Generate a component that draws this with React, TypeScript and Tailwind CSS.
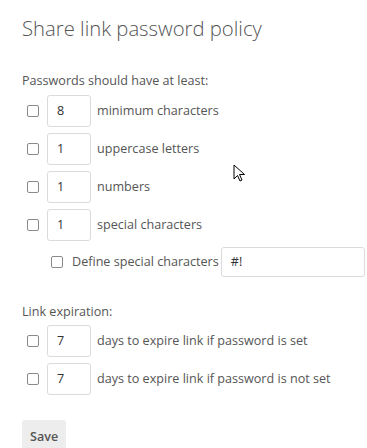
import React from "react";

const font = { fontFamily: '"Open Sans", "Noto Sans", sans-serif' };

function Box() {
  return <span className="inline-block w-[12px] h-[12px] border border-[#8a8a8a] rounded-[2px] bg-white shrink-0" />;
}

function NumRow({ value, label }: { value: string; label: string }) {
  return (
    <div className="flex items-center h-[32px] whitespace-nowrap">
      <span className="ml-[5px] mr-[8px] flex"><Box /></span>
      <div className="w-[44px] h-[32px] shrink-0 border border-[#dbdbdb] rounded-[3px] bg-white flex items-center pl-[9px] text-[12.6px] text-[#333]">{value}</div>
      <span className="ml-[6px] text-[12.6px] text-[#555]">{label}</span>
    </div>
  );
}

export default function App() {
  return (
    <div className="relative w-[367px] h-[448px] bg-white overflow-hidden" style={font}>
      <div className="pl-[22px] pt-[13px]">
        <h2 className="text-[20.3px] font-light text-[#555] leading-[30px] whitespace-nowrap">Share link password policy</h2>
        <p className="mt-[28px] text-[12.6px] text-[#555] leading-[20px]">Passwords should have at least:</p>
        <div className="mt-[4px] flex flex-col gap-[6px]">
          <NumRow value="8" label="minimum characters" />
          <NumRow value="1" label="uppercase letters" />
          <NumRow value="1" label="numbers" />
          <NumRow value="1" label="special characters" />
          <div className="flex items-center h-[30px] ml-[29px] whitespace-nowrap">
            <Box />
            <span className="ml-[9px] text-[12.6px] text-[#555]">Define special characters</span>
            <div className="ml-[2px] w-[144px] h-[30px] shrink-0 border border-[#dbdbdb] rounded-[3px] bg-white flex items-center pl-[9px] text-[12.6px] text-[#333]">#!</div>
          </div>
        </div>
        <p className="mt-[25px] text-[12.6px] text-[#555] leading-[20px]">Link expiration:</p>
        <div className="mt-[3px] flex flex-col gap-[6px]">
          <NumRow value="7" label="days to expire link if password is set" />
          <NumRow value="7" label="days to expire link if password is not set" />
        </div>
        <button className="mt-[25px] h-[34px] px-[8px] rounded-[3px] bg-[#ededed] text-[12.6px] font-semibold text-[#555]">Save</button>
      </div>
      <svg className="absolute left-[233px] top-[164px]" width="14" height="20" viewBox="0 0 14 20">
        <path d="M1 1 L1 15 L4.5 11.5 L7 17 L9 16 L6.5 10.5 L11.5 10.5 Z" fill="white" stroke="black" strokeWidth="1" strokeLinejoin="miter" />
      </svg>
    </div>
  );
}
